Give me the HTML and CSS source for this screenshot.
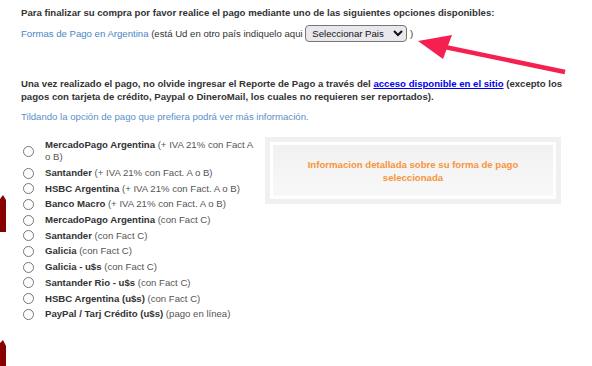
FILE: index.html
```html
<!DOCTYPE html>
<html lang="es">

<head>
    <meta charset="UTF-8">
    <title>Forma de pago</title>
    <link rel="stylesheet" href="styles.css">
</head>

<body>

    <div class="edge edge-top"></div>
    <div class="edge edge-bottom"></div>

    <main class="pago">
        <p class="intro">Para finalizar su compra por favor realice el pago mediante uno de las siguientes opciones disponibles:</p>

        <p class="pais"><span class="azul">Formas de Pago en Argentina</span> (está Ud en otro país indiquelo aqui
            <select class="pais-select">
                <option>Seleccionar Pais</option>
            </select> )</p>

        <p class="aviso">Una vez realizado el pago, no olvide ingresar el Reporte de Pago a través del
            <a href="#">acceso disponible en el sitio</a> (excepto los pagos con tarjeta de crédito, Paypal o
            DineroMail, los cuales no requieren ser reportados).</p>

        <p class="tildando">Tildando la opción de pago que prefiera podrá ver más información.</p>

        <div class="opciones">
            <ul class="lista">
                <li><input type="radio" name="pago"><label><b>MercadoPago Argentina</b> (+ IVA 21% con Fact A o B)</label></li>
                <li><input type="radio" name="pago"><label><b>Santander</b> (+ IVA 21% con Fact. A o B)</label></li>
                <li><input type="radio" name="pago"><label><b>HSBC Argentina</b> (+ IVA 21% con Fact. A o B)</label></li>
                <li><input type="radio" name="pago"><label><b>Banco Macro</b> (+ IVA 21% con Fact. A o B)</label></li>
                <li><input type="radio" name="pago"><label><b>MercadoPago Argentina</b> (con Fact C)</label></li>
                <li><input type="radio" name="pago"><label><b>Santander</b> (con Fact C)</label></li>
                <li><input type="radio" name="pago"><label><b>Galicia</b> (con Fact C)</label></li>
                <li><input type="radio" name="pago"><label><b>Galicia - u$s</b> (con Fact C)</label></li>
                <li><input type="radio" name="pago"><label><b>Santander Rio - u$s</b> (con Fact C)</label></li>
                <li><input type="radio" name="pago"><label><b>HSBC Argentina (u$s)</b> (con Fact C)</label></li>
                <li><input type="radio" name="pago"><label><b>PayPal / Tarj Crédito (u$s)</b> (pago en línea)</label></li>
            </ul>

            <div class="detalle">
                <div class="detalle-inner">Informacion detallada sobre su forma de pago seleccionada</div>
            </div>
        </div>
    </main>

    <svg class="flecha" width="592" height="366" viewBox="0 0 592 366">
        <line x1="565" y1="72" x2="440" y2="46" stroke="#f5204f" stroke-width="4.5" />
        <polygon points="418,41 452,35 443,59" fill="#f5204f" />
    </svg>

</body>

</html>
```

FILE: styles.css
```css
body {
    margin: 0;
    font-family: 'Liberation Sans', Arial, sans-serif;
    font-size: 9.6px;
    color: #333;
    background-color: #fff;
}

.pago {
    padding: 6px 20px 0 21px;
}

p {
    margin: 0;
    line-height: 13px;
}

.intro {
    font-weight: bold;
    margin-bottom: 6px;
}

.pais {
    line-height: 17px;
    height: 17px;
}

.azul {
    color: #4a86c5;
}

.pais-select {
    font-family: 'Liberation Sans', Arial, sans-serif;
    font-size: 9.6px;
    width: 102px;
    height: 17px;
    margin: 0;
    padding: 0 2px;
    vertical-align: top;
    border: 1px solid #767676;
    border-radius: 4px;
    background-color: #e9e9ed;
    color: #111;
}

.aviso {
    font-weight: bold;
    margin-top: 35px;
}

.aviso a {
    color: #0000ee;
}

.tildando {
    color: #5b8fc9;
    margin-top: 7px;
}

.opciones {
    display: flex;
    gap: 10px;
    margin-top: 14px;
}

.lista {
    list-style: none;
    margin: 0;
    padding: 0;
    width: 234px;
}

.lista li {
    display: flex;
    align-items: center;
    line-height: 12px;
    padding: 2px 0 1.7px;
}

.lista li:first-child {
    padding-bottom: 2px;
}

.lista input {
    margin: 0 11px 0 2px;
    width: 11px;
    height: 11px;
    flex: none;
}

.lista label {
    color: #555;
}

.lista b {
    color: #333;
}

.detalle {
    width: 280px;
    margin-top: 0;
    align-self: flex-start;
    border: 5px solid #eff0f0;
    padding: 3px;
    background-color: #fff;
}

.detalle-inner {
    height: 51px;
    padding: 0 30px;
    display: flex;
    align-items: center;
    justify-content: center;
    text-align: center;
    font-weight: bold;
    color: #f7943a;
    line-height: 13px;
    background: linear-gradient(#f1f1f1, #f8f8f8);
}

.edge {
    position: absolute;
    left: 0;
    width: 6px;
    background-color: #880000;
}

.edge-top {
    top: 195px;
    height: 37px;
    clip-path: polygon(0 4px, 3px 0, 6px 5px, 6px 100%, 0 100%);
}

.edge-bottom {
    top: 340px;
    height: 26px;
    clip-path: polygon(0 3px, 3px 0, 6px 6px, 6px 100%, 0 100%);
}

.flecha {
    position: absolute;
    top: 0;
    left: 0;
    pointer-events: none;
}
```
